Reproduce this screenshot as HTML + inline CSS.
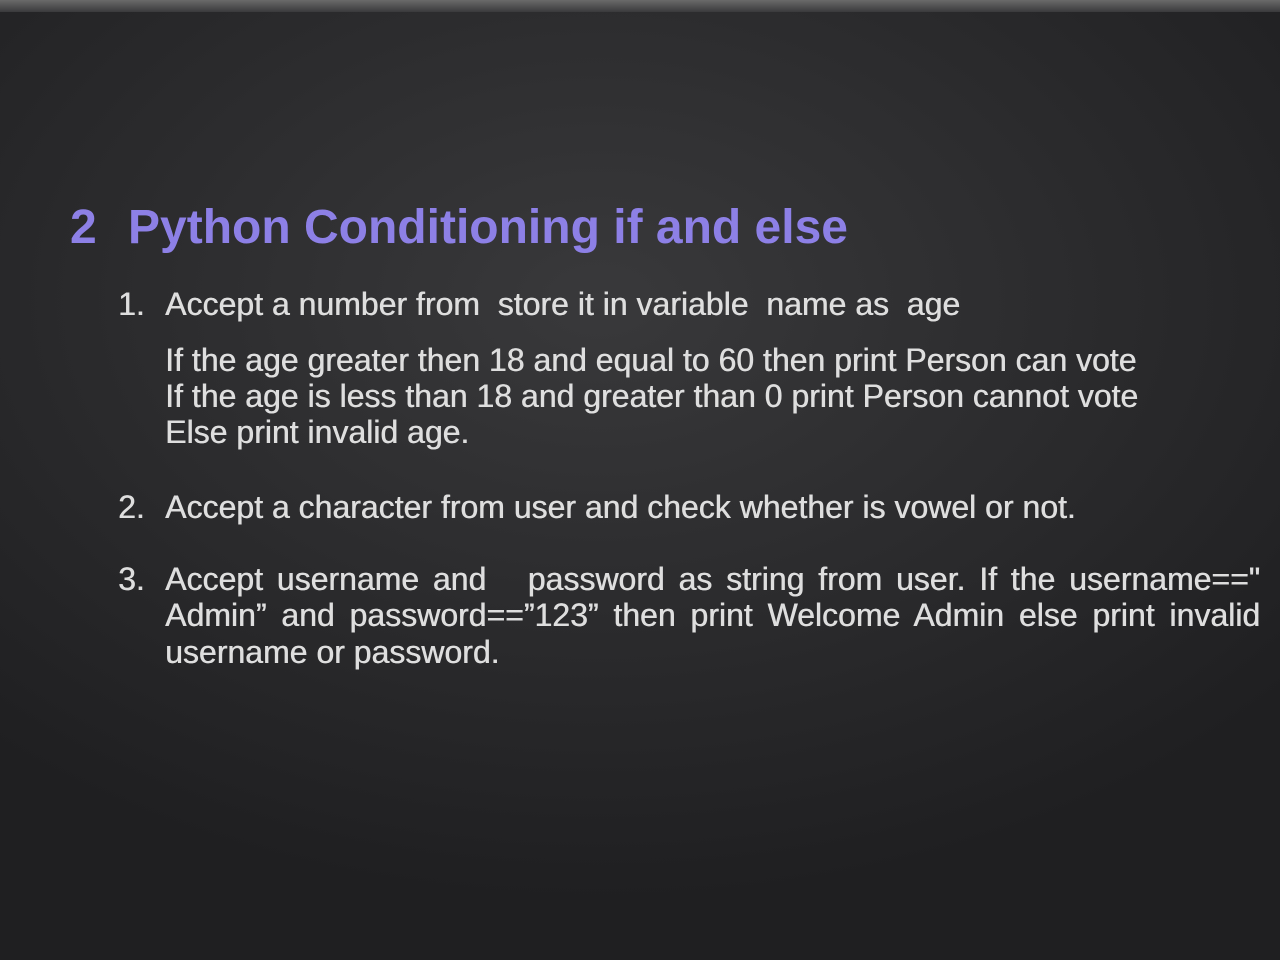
<!DOCTYPE html>
<html><head><meta charset="utf-8"><style>
html,body{margin:0;padding:0}
body{width:1280px;height:960px;position:relative;overflow:hidden;
background:radial-gradient(ellipse 900px 600px at 600px 300px,#39393b 0%,#2c2c2e 50%,#1f1f21 100%);
font-family:"Liberation Sans",sans-serif;}
.top{position:absolute;left:0;top:0;width:1280px;height:12px;background:linear-gradient(#6a6a6a,#3a3a3c)}
.t{position:absolute;white-space:nowrap;color:#dedede;font-size:32px;letter-spacing:0px;line-height:36px;text-shadow:0.5px 0 0 #dedede}
.h{position:absolute;color:#8d80e6;font-weight:bold;font-size:48px;letter-spacing:0px;white-space:nowrap;line-height:50px}
.j{text-align:justify;text-align-last:justify;width:1095px}
</style></head><body>
<div class="top"></div>
<div class="h" style="left:70px;top:203px">2</div>
<div class="h" style="left:128px;top:203px">Python Conditioning if and else</div>
<div class="t" style="left:118px;top:286px">1.</div>
<div class="t" style="left:165px;top:286px">Accept a number from&nbsp; store it in variable&nbsp; name as&nbsp; age</div>
<div class="t" style="left:165px;top:342px">If the age greater then 18 and equal to 60 then print Person can vote</div>
<div class="t" style="left:165px;top:378px">If the age is less than 18 and greater than 0 print Person cannot vote</div>
<div class="t" style="left:165px;top:414px">Else print invalid age.</div>
<div class="t" style="left:118px;top:489px">2.</div>
<div class="t" style="left:165px;top:489px">Accept a character from user and check whether is vowel or not.</div>
<div class="t" style="left:118px;top:561px">3.</div>
<div class="t j" style="left:165px;top:561px">Accept username and &nbsp; password as string from user. If the username=="</div>
<div class="t j" style="left:165px;top:597px">Admin” and password==”123” then print Welcome Admin else print invalid</div>
<div class="t" style="left:165px;top:634px">username or password.</div>
</body></html>
